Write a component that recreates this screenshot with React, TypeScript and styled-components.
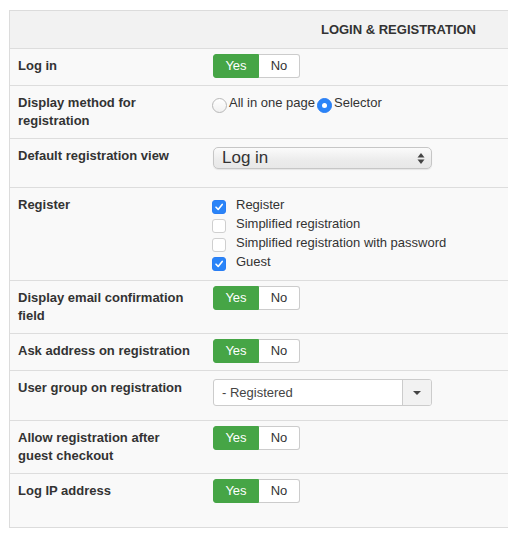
import styled, { createGlobalStyle } from 'styled-components'

const GlobalStyle = createGlobalStyle`
  body {
    margin: 0;
    background: #fff;
    font-family: 'Liberation Sans', Arial, Helvetica, sans-serif;
    font-size: 13px;
    color: #333;
    overflow: hidden;
  }
`

const Page = styled.div`
  padding: 10px 0 0 9px;
  width: 508px;
  overflow: hidden;
  box-sizing: border-box;
`

const Panel = styled.div`
  width: 530px;
  border: 1px solid #dcdcdc;
  background: #f9f9f9;
`

const Header = styled.div`
  background: #f2f2f2;
  padding: 10px 64px 9px 0;
  text-align: right;
  font-weight: bold;
  line-height: 18px;
  text-transform: uppercase;
  color: #333;
`

const Row = styled.div<{ $tail?: number }>`
  display: grid;
  grid-template-columns: 203px 1fr;
  align-items: start;
  border-top: 1px solid #dddddd;
  padding: 8px 0 ${(p) => 8 + (p.$tail || 0)}px;
`

const Label = styled.div`
  padding-left: 8px;
  padding-right: 19px;
  font-weight: bold;
  line-height: 18px;
  color: #333;
`

const Toggle = styled.div`
  display: inline-flex;
  margin: -3px 0 -1px;
  justify-self: start;
`

const ToggleBtn = styled.span<{ $on?: boolean; $w: number }>`
  width: ${(p) => p.$w}px;
  box-sizing: border-box;
  text-align: center;
  line-height: 22px;
  border: 1px solid ${(p) => (p.$on ? '#46a546' : '#cccccc')};
  background: ${(p) => (p.$on ? '#46a546' : '#ffffff')};
  color: ${(p) => (p.$on ? '#ffffff' : '#333333')};
  &:first-child {
    border-radius: 3px 0 0 3px;
  }
  &:last-child {
    border-radius: 0 3px 3px 0;
    border-left: none;
  }
`

const RadioGroup = styled.div`
  display: flex;
  align-items: flex-start;
  line-height: 18px;
  margin-left: -1px;
`

const RadioDot = styled.span<{ $on?: boolean }>`
  width: 15px;
  height: 15px;
  margin-top: 4px;
  border-radius: 50%;
  box-sizing: border-box;
  flex: none;
  display: flex;
  align-items: center;
  justify-content: center;
  border: 1px solid ${(p) => (p.$on ? '#2a7ef4' : '#b8b8b8')};
  background: ${(p) => (p.$on ? '#2a84f8' : 'linear-gradient(#ffffff, #f1f1f1)')};
  &::after {
    content: '';
    display: ${(p) => (p.$on ? 'block' : 'none')};
    width: 5px;
    height: 5px;
    border-radius: 50%;
    background: #fff;
  }
`

const RadioText = styled.span`
  margin: 0 2px 0 2px;
  color: #333;
`

const CheckList = styled.div`
  display: flex;
  flex-direction: column;
  margin: -1px 0 1px -1px;
`

const CheckItem = styled.div`
  display: flex;
  align-items: flex-start;
  height: 19px;
  line-height: 19px;
`

const CheckBox = styled.span<{ $on?: boolean }>`
  width: 14px;
  height: 14px;
  margin: 5px 10px 0 0;
  box-sizing: border-box;
  border-radius: 3px;
  flex: none;
  display: flex;
  align-items: center;
  justify-content: center;
  border: 1px solid ${(p) => (p.$on ? '#2a7ef4' : '#cfcfcf')};
  background: ${(p) => (p.$on ? '#2a84f8' : '#ffffff')};
`

const NativeSelect = styled.div`
  width: 219px;
  height: 22px;
  margin-bottom: 10px;
  box-sizing: border-box;
  border: 1px solid #c6c6c6;
  border-radius: 5px;
  background: linear-gradient(#fbfbfb, #ececec 60%, #e8e8e8);
  box-shadow: 0 1px 1px rgba(0, 0, 0, 0.08);
  display: flex;
  align-items: center;
  justify-content: space-between;
  padding: 0 6px 0 8px;
  font-size: 17px;
  color: #333;
`

const Chosen = styled.div`
  width: 219px;
  height: 27px;
  margin-bottom: 6px;
  box-sizing: border-box;
  border: 1px solid #cccccc;
  border-radius: 3px;
  background: #fff;
  display: flex;
  align-items: stretch;
  overflow: hidden;
`

const ChosenText = styled.span`
  flex: 1;
  padding-left: 8px;
  line-height: 25px;
  color: #444;
`

const ChosenCaret = styled.span`
  width: 28px;
  border-left: 1px solid #cccccc;
  background: #f2f2f2;
  display: flex;
  align-items: center;
  justify-content: center;
  &::after {
    content: '';
    border-left: 4px solid transparent;
    border-right: 4px solid transparent;
    border-top: 4px solid #444;
  }
`

function YesNo() {
  return (
    <Toggle>
      <ToggleBtn $on $w={46}>Yes</ToggleBtn>
      <ToggleBtn $w={41}>No</ToggleBtn>
    </Toggle>
  )
}

function Check({ on, text }: { on?: boolean; text: string }) {
  return (
    <CheckItem>
      <CheckBox $on={on}>
        {on && (
          <svg width="10" height="10" viewBox="0 0 10 10">
            <polyline points="2,5.2 4.2,7.4 8.2,2.4" fill="none" stroke="#fff" strokeWidth="1.6" strokeLinecap="round" strokeLinejoin="round" />
          </svg>
        )}
      </CheckBox>
      {text}
    </CheckItem>
  )
}

export default function App() {
  return (
    <Page>
      <GlobalStyle />
      <Panel>
        <Header>Login &amp; Registration</Header>
        <Row>
          <Label>Log in</Label>
          <YesNo />
        </Row>
        <Row>
          <Label>Display method for registration</Label>
          <RadioGroup>
            <RadioDot />
            <RadioText>All in one page</RadioText>
            <RadioDot $on />
            <RadioText>Selector</RadioText>
          </RadioGroup>
        </Row>
        <Row>
          <Label>Default registration view</Label>
          <NativeSelect>
            <span>Log in</span>
            <svg width="8" height="13" viewBox="0 0 8 13">
              <polygon points="4,1 7.5,5.5 0.5,5.5" fill="#444" />
              <polygon points="4,12 7.5,7.5 0.5,7.5" fill="#444" />
            </svg>
          </NativeSelect>
        </Row>
        <Row>
          <Label>Register</Label>
          <CheckList>
            <Check on text="Register" />
            <Check text="Simplified registration" />
            <Check text="Simplified registration with password" />
            <Check on text="Guest" />
          </CheckList>
        </Row>
        <Row>
          <Label>Display email confirmation field</Label>
          <YesNo />
        </Row>
        <Row>
          <Label>Ask address on registration</Label>
          <YesNo />
        </Row>
        <Row>
          <Label>User group on registration</Label>
          <Chosen>
            <ChosenText>- Registered</ChosenText>
            <ChosenCaret />
          </Chosen>
        </Row>
        <Row>
          <Label>Allow registration after guest checkout</Label>
          <YesNo />
        </Row>
        <Row $tail={17}>
          <Label>Log IP address</Label>
          <YesNo />
        </Row>
      </Panel>
    </Page>
  )
}
